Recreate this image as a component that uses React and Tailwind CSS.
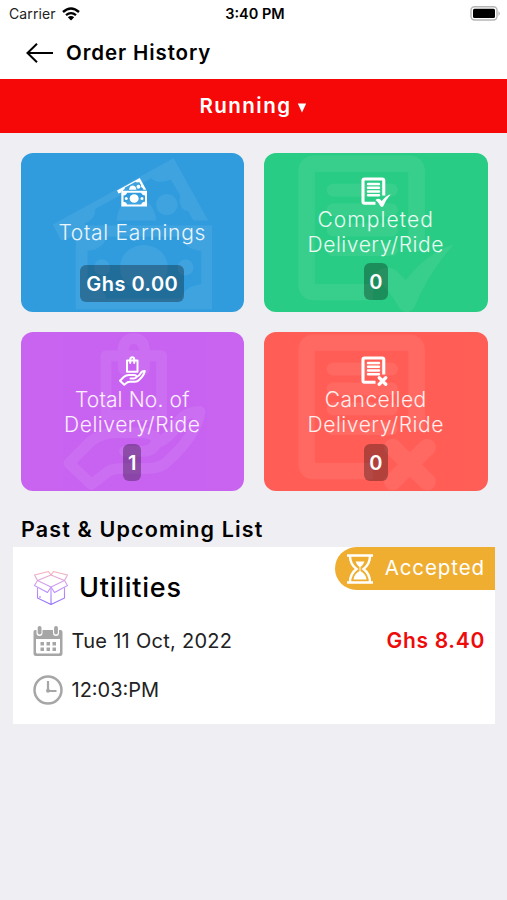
const MoneyIcon = ({ className }) => (
  <svg viewBox="0 0 60 60" className={className} fill="currentColor">
    <path
      fillRule="evenodd"
      d="M0 27 45.5 2 58.5 25.5H53L51 22Q47 21 48 16L44.5 10Q40 12 37 9.500L16 21Q16 25 12 26.500V28H8.600V31L3 33ZM24 25.500Q25 17 32 17Q38 18 39 25.500ZM43 15.500A4 4 0 1 1 42.900 15.500Z"
    />
    <path
      fillRule="evenodd"
      d="M8.600 27.400H60V59H8.600ZM20 31.500Q19.500 36 13 37V49.500Q19.500 50.500 20 55H48.500Q49 50.500 56 49.500V37Q49 36 48.500 31.500Z"
    />
    <ellipse cx="34.300" cy="43.200" rx="9" ry="8.500" />
    <circle cx="18.500" cy="43.200" r="3" />
    <circle cx="50" cy="43.200" r="3" />
  </svg>
);

const DocPage = () => (
  <>
    <path d="M29 52.500H7Q4 52.500 4 49.500V7Q4 4 7 4H42.500Q45.500 4 45.500 7V37" strokeWidth="6.200" />
    <path d="M14 14H36M14 21.500H36M14 29H36M14 36.500H36" strokeWidth="4.800" strokeLinecap="round" />
  </>
);

const DocCheckIcon = ({ className }) => (
  <svg viewBox="0 0 60 60" className={className} fill="none" stroke="currentColor">
    <DocPage />
    <path
      d="M29 46Q34 41.500 38 44.500L41.500 48Q49 38 59.500 34.500Q50 45 44.500 58.500Q42 61.500 39 58.500Q35 51 29 46Z"
      fill="currentColor"
      stroke="none"
    />
  </svg>
);

const DocCrossIcon = ({ className }) => (
  <svg viewBox="0 0 60 60" className={className} fill="none" stroke="currentColor">
    <DocPage />
    <path d="M36.500 43.500 49.500 56.500M49.500 43.500 36.500 56.500" strokeWidth="6.500" strokeLinecap="round" />
  </svg>
);

const HandBagIcon = ({ className }) => (
  <svg
    viewBox="0 0 60 60"
    className={className}
    fill="none"
    stroke="currentColor"
    strokeWidth="4"
    strokeLinejoin="round"
    strokeLinecap="round"
  >
    <path d="M20 9H41V31.500H20ZM26.500 14V6.500Q27 2.500 30.500 2.500Q34 2.500 34.500 6.500V14" />
    <path d="M27 45H34Q38 45 39 41.500Q39.500 38.500 34 38H24Q18 38 14 41.500L6 49.500 14.500 57.500 21 52.500Q23 51.500 26 51.500H36Q41 51.500 44 48Q54 39 55.500 30Q49 30 46.500 35.500Q44 40 39 42" />
  </svg>
);

const BoxIcon = () => (
  <svg viewBox="0 0 36 36" className="h-9 w-9" fill="none" strokeWidth="1.100" strokeLinejoin="round">
    <defs>
      <linearGradient id="box" x1="0" y1="0" x2="0" y2="36" gradientUnits="userSpaceOnUse">
        <stop offset="0" stopColor="#fbb4b4" />
        <stop offset=".45" stopColor="#c99af5" />
        <stop offset="1" stopColor="#8d6bfa" />
      </linearGradient>
    </defs>
    <g stroke="url(#box)">
      <path d="M4.500 10.500 18 17 31.500 10.500 18 5ZM18 5 15.500 1.500 1.500 5 4.500 10.500ZM18 5 20.500 1.500 34.500 5 31.500 10.500ZM4.500 10.500 1.500 15.500 14.500 22.500 18 17ZM31.500 10.500 34.500 15.500 21.500 22.500 18 17Z" />
      <path d="M4.500 17.500V28L18 34.500 31.500 28V17.500M18 17V34.500M7 26V28" />
    </g>
  </svg>
);

const CalendarIcon = () => (
  <svg viewBox="0 0 30 30" className="h-[30px] w-[30px]" fill="#a6a6a6">
    <path
      fillRule="evenodd"
      d="M2 4H3.500V7Q3.500 10 6.500 10T9.500 7V4H20V7Q20 10 23 10T26 7V4H27.500Q29.500 4 29.500 6V27.500Q29.500 30 27 30H3Q.5 30 .5 27.500V6Q.5 4 2 4ZM3 13V26Q3 27.500 4.500 27.500H25.500Q27 27.500 27 26V13Z"
    />
    <rect x="4.700" y="0" width="3.800" height="8.500" rx="1.800" />
    <rect x="21.100" y="0" width="3.800" height="8.500" rx="1.800" />
    <path d="M7.500 16H11V19.500H7.500ZM13.500 16H17V19.500H13.500ZM19.500 16H23V19.500H19.500ZM7.500 21.500H11V25H7.500ZM13.500 21.500H17V25H13.500ZM19.500 21.500H23V25H19.500Z" />
  </svg>
);

const ClockIcon = () => (
  <svg viewBox="0 0 30 30" className="h-[30px] w-[30px]" fill="none" stroke="#a6a6a6">
    <circle cx="15" cy="15" r="13.500" strokeWidth="2.500" />
    <path d="M15 6V16H23.500" strokeWidth="2.200" />
    <circle cx="15" cy="15.800" r="2" fill="#a6a6a6" stroke="none" />
  </svg>
);

const HourglassIcon = () => (
  <svg viewBox="0 0 28 30" className="h-[30px] w-7" fill="none" stroke="#fff">
    <path d="M1 1.500H27M1 28.500H27" strokeWidth="2.600" />
    <path d="M4 2Q4 10 10.500 15Q4 20 4 28M24 2Q24 10 17.500 15Q24 20 24 28" strokeWidth="2.400" />
    <path d="M9.500 7.500H18.500Q17 11.500 14.500 13V17Q20 20 20.500 25.500H7.500Q8 20 13.500 17V13Q11 11.500 9.500 7.500Z" fill="#fff" stroke="none" />
  </svg>
);

const stats = [
  {
    Icon: MoneyIcon,
    lines: [["Total Earnings", "tracking-[0.700px]"]],
    value: "Ghs 0.00",
    bg: "bg-[#319cdd]",
    gap: "mt-[13px] h-[25px]",
    badge: "mt-[20px] w-[104px] tracking-[0.500px]",
  },
  {
    Icon: DocCheckIcon,
    lines: [
      ["Completed", "tracking-[1.100px]"],
      ["Delivery/Ride", "tracking-[0.550px]"],
    ],
    value: "0",
    bg: "bg-[#29cc85]",
    gap: "",
    badge: "mt-[6px] w-6",
  },
  {
    Icon: HandBagIcon,
    lines: [
      ["Total No. of", "tracking-[0.150px]"],
      ["Delivery/Ride", "tracking-[0.550px]"],
    ],
    value: "1",
    bg: "bg-[#c964f1]",
    gap: "mt-px",
    badge: "mt-[7px] w-[18px]",
  },
  {
    Icon: DocCrossIcon,
    lines: [
      ["Cancelled", "tracking-[0.450px]"],
      ["Delivery/Ride", "tracking-[0.550px]"],
    ],
    value: "0",
    bg: "bg-[#ff5e57]",
    gap: "mt-px",
    badge: "mt-[7px] w-6",
  },
];

function StatCard({ Icon, lines, value, bg, gap, badge }) {
  return (
    <div
      className={`relative flex h-[159px] flex-col items-center overflow-hidden rounded-xl pt-6 text-white ${bg}`}
    >
      <Icon className="absolute top-0 left-8 h-[159px] w-[159px] opacity-[0.07]" />
      <Icon className="h-[30px] w-[30px] shrink-0" />
      <div className={`text-center text-[21px] leading-[25px] font-[350] whitespace-nowrap text-white/90 ${gap}`}>
        {lines.map(([text, tracking]) => (
          <p key={text} className={tracking}>
            {text}
          </p>
        ))}
      </div>
      <div
        className={`relative flex h-[37px] shrink-0 items-center justify-center rounded-md bg-black/30 text-[20px] font-semibold whitespace-nowrap ${badge}`}
      >
        {value}
      </div>
    </div>
  );
}

export default function App() {
  return (
    <div className="h-[900px] w-full overflow-hidden bg-[#efeef3] font-['Inter',sans-serif] text-black">
      {/* Status bar */}
      <div className="grid h-[27px] grid-cols-3 items-center bg-white pr-[6px] pl-[9px]">
        <div className="flex items-center gap-[6px] text-[14px] tracking-[0.100px] text-[#222]">
          <span>Carrier</span>
          <svg viewBox="0 0 18 14" className="h-[14px] w-[18px]" fill="none" stroke="#000">
            <path d="M1 5Q9 -2 17 5" strokeWidth="2.400" />
            <path d="M4 8.200Q9 4 14 8.200" strokeWidth="2.300" />
            <path d="M9 13.500 5.800 10.300Q9 7.800 12.200 10.300Z" fill="#000" stroke="none" />
          </svg>
        </div>
        <span className="text-center text-[14.500px] font-semibold">3:40 PM</span>
        <svg viewBox="0 0 31 15" className="h-[15px] w-[31px] justify-self-end">
          <rect x="1" y=".8" width="26" height="13.200" rx="3.500" fill="#fff" stroke="#b5b5b5" strokeWidth="1.400" />
          <rect x="3" y="2.800" width="22" height="9.200" rx="1.500" />
          <path d="M28.500 5Q31 7.400 28.500 10Z" fill="#aaa" />
        </svg>
      </div>

      {/* Header */}
      <div className="flex h-[52px] items-center bg-white pl-[26px]">
        <svg viewBox="0 0 28 20" className="h-5 w-7" fill="none" stroke="#000" strokeWidth="2">
          <path d="M27 10H1.500M11 .8 1.500 10 11 19.200" />
        </svg>
        <h1 className="ml-3 text-[20.500px] font-semibold tracking-[0.900px]">Order History</h1>
      </div>

      <div className="flex h-[54px] items-center justify-center gap-[6px] bg-[#f60808] text-white">
        <span className="text-[20.500px] font-semibold tracking-[1.450px]">Running</span>
        <svg viewBox="0 0 10 10" className="mt-[3px] h-[10px] w-[10px]" fill="#fff">
          <path d="M.8 .5H9.200L5 9.500Z" />
        </svg>
      </div>

      {/* Stats */}
      <div className="grid grid-cols-2 gap-5 pt-[20px] pr-[19.500px] pl-[20.500px]">
        {stats.map((stat, i) => (
          <StatCard key={i} {...stat} />
        ))}
      </div>

      <h2 className="mt-[25px] ml-[21px] h-[31px] text-[21.500px] leading-[26px] font-semibold tracking-[1.150px] whitespace-nowrap">
        Past &amp; Upcoming List
      </h2>

      {/* Order */}
      <div className="mr-3 ml-[13px] flex h-[177px] bg-white">
        <div className="flex flex-1 flex-col pl-5">
          <div className="mt-[23px] flex h-9 items-center gap-[10px]">
            <BoxIcon />
            <span className="text-[27px] font-medium tracking-[0.750px]">Utilities</span>
          </div>
          <div className="mt-[20px] flex h-[30px] items-center gap-[8.500px] text-[20px] text-[#222]">
            <CalendarIcon />
            <span className="tracking-[0.280px] whitespace-nowrap">Tue 11 Oct, 2022</span>
          </div>
          <div className="mt-[19px] flex h-[30px] items-center gap-[8.500px] text-[20px] text-[#222]">
            <ClockIcon />
            <span>12:03:PM</span>
          </div>
        </div>
        <div className="flex w-[160px] flex-col items-end">
          <div className="flex h-[43px] w-full items-center justify-between rounded-l-full bg-[#f0ae30] pr-[10px] pl-[11px] text-white">
            <HourglassIcon />
            <span className="text-[20.500px] tracking-[0.900px]">Accepted</span>
          </div>
          <span className="mt-[36px] pr-[10px] text-[21px] leading-[30px] font-semibold tracking-[0.700px] text-[#ee0b0b]">
            Ghs 8.40
          </span>
        </div>
      </div>
    </div>
  );
}
